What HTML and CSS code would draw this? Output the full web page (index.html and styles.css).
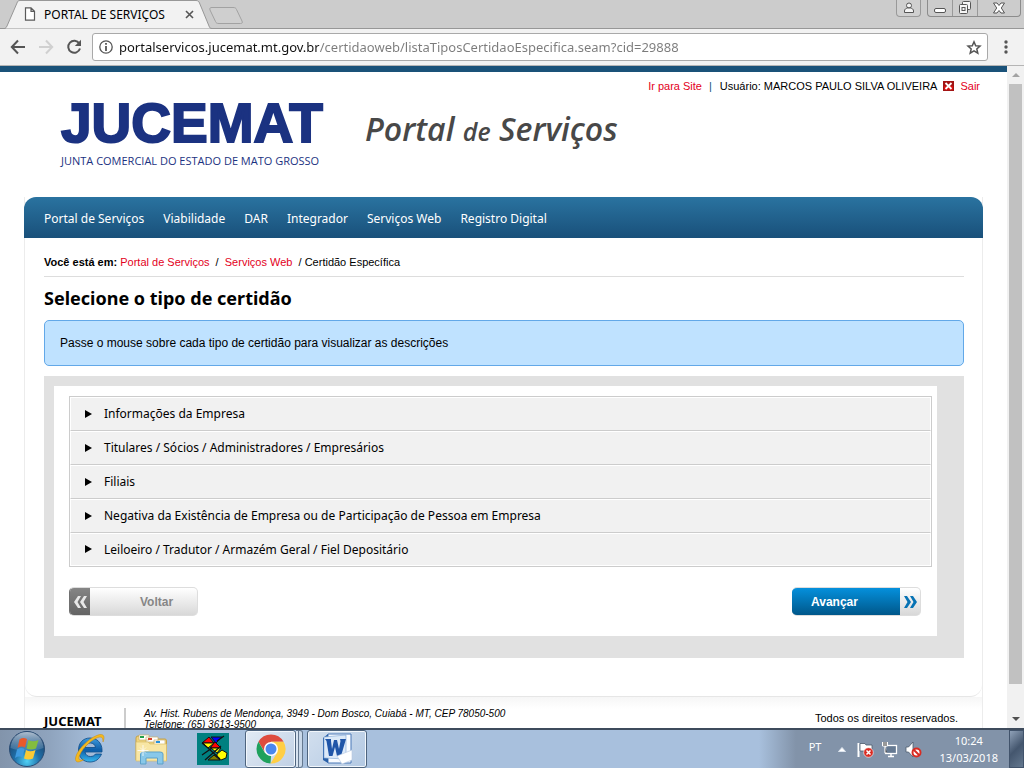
FILE: index.html
```html
<!DOCTYPE html>
<html lang="pt-BR">
<head>
<meta charset="utf-8">
<title>PORTAL DE SERVIÇOS</title>
<link rel="stylesheet" href="styles.css">
</head>
<body>
<header class="tabstrip">
  <svg class="tab-shape" width="244" height="29" viewBox="0 0 244 29" aria-hidden="true">
    <path d="M0 28.500H5C6 28 6.500 27 7 26L17 3C17.500 1.500 18 .5 20 .5H196C198 .5 199 1.500 199.500 3L209 26C209.500 27.500 210 28.500 212 28.500" fill="#f2f2f2" stroke="#979797"/>
    <path d="M212 7.500H233C235 7.500 236 8 236.500 9.500L242 21C242.800 23 242 23.500 240.500 23.500H219C217 23.500 216 23 215.500 21.500L210 10C209.500 8 210 7.500 212 7.500Z" fill="#cfcfcf" stroke="#a2a2a2"/>
  </svg>
  <div class="tab">
    <svg width="12" height="14" viewBox="0 0 12 14" fill="#fff" stroke="#5a5a5a" stroke-width="1.200"><path d="M1.500.8H7L10.500 4.300V13.200H1.500ZM7 .8V4.300H10.500"/></svg>
    <span class="tab-title">PORTAL DE SERVIÇOS</span>
    <button class="plain" aria-label="Fechar guia"><svg width="9" height="9" viewBox="0 0 9 9" stroke="#555" stroke-width="1.600"><path d="M1 1L8 8M8 1L1 8"/></svg></button>
  </div>
  <div class="window-controls">
    <button class="win user" aria-label="Usuário"><svg width="12" height="12" viewBox="0 0 12 12" fill="#f5f5f5" stroke="#555"><circle cx="6" cy="3.500" r="2.500"/><path d="M1.500 10.500V9C1.500 7 3 6.500 4.500 6H7.500C9 6.500 10.500 7 10.500 9V10.500Z"/></svg></button>
    <div class="win-group">
      <button class="win" aria-label="Minimizar"><svg width="13" height="14" viewBox="0 0 13 14" fill="#fff" stroke="#555"><rect x=".5" y="7.500" width="11" height="4" rx="1.500"/></svg></button>
      <button class="win" aria-label="Restaurar"><svg width="14" height="14" viewBox="0 0 14 14" fill="#f5f5f5" stroke="#555"><rect x="4.500" y=".5" width="8" height="8" rx="1"/><rect x="1.500" y="3.500" width="8" height="9" rx="1"/><rect x="4" y="6.500" width="3" height="3"/></svg></button>
      <button class="win close" aria-label="Fechar"><svg width="14" height="12" viewBox="0 0 14 12" fill="#fff" stroke="#555"><path d="M1.500 1H5L7 3.500L9 1H12.500L9.300 6L12.500 11H9L7 8.500L5 11H1.500L4.700 6Z"/></svg></button>
    </div>
  </div>
</header>
<div class="toolbar">
  <button class="plain" aria-label="Voltar"><svg width="16" height="16" viewBox="0 0 16 16" fill="none" stroke="#555" stroke-width="2"><path d="M15 8H2M8 1.500L1.800 8L8 14.500"/></svg></button>
  <button class="plain" aria-label="Avançar"><svg width="16" height="16" viewBox="0 0 16 16" fill="none" stroke="#d0d0d0" stroke-width="2"><path d="M1 8H14M8 1.500L14.200 8L8 14.500"/></svg></button>
  <button class="plain" aria-label="Recarregar"><svg width="16" height="16" viewBox="0 0 16 16"><path d="M13.300 4.500A6 6 0 1 0 14 9.500" fill="none" stroke="#555" stroke-width="2"/><path d="M15 .8V7H8.800Z" fill="#555"/></svg></button>
  <div class="omnibox">
    <svg width="14" height="14" viewBox="0 0 14 14" fill="none" stroke="#555"><circle cx="7" cy="7" r="6.200" stroke-width="1.300"/><path d="M7 3V4.700M7 6V11" stroke-width="1.800"/></svg>
    <input class="url" type="text" aria-label="Endereço" value="portalservicos.jucemat.mt.gov.br/certidaoweb/listaTiposCertidaoEspecifica.seam?cid=29888">
    <button class="plain" aria-label="Favoritos"><svg width="16" height="15" viewBox="0 0 16 15" fill="none" stroke="#555" stroke-width="1.500"><path d="M8 1.800L9.700 5.700L14 6.100L10.800 8.900L11.800 13.200L8 10.900L4.200 13.200L5.200 8.900L2 6.100L6.300 5.700Z"/></svg></button>
  </div>
  <button class="plain" aria-label="Menu"><svg width="4" height="14" viewBox="0 0 4 14" fill="#555"><circle cx="2" cy="2" r="1.700"/><circle cx="2" cy="7" r="1.700"/><circle cx="2" cy="12" r="1.700"/></svg></button>
</div>

<div class="viewport">
  <main class="page">
    <div class="userbar">
      <a href="#">Ir para Site</a><span class="bar">|</span><span>Usuário: MARCOS PAULO SILVA OLIVEIRA</span>
      <svg width="11" height="10" viewBox="0 0 11 10"><rect width="11" height="10" fill="#a31414"/><rect x="1" y="5" width="9" height="4" fill="#d41111"/><path d="M2.500 2L8.500 8M8.500 2L2.500 8" stroke="#fff" stroke-width="1.800"/></svg>
      <a href="#">Sair</a>
    </div>
    <div class="brand">
      <div class="logo"><span class="logo-name">JUCEMAT</span><span class="logo-sub">JUNTA COMERCIAL DO ESTADO DE MATO GROSSO</span></div>
      <div class="portal-title">Portal <small>de</small> Serviços</div>
    </div>
    <div class="frame">
      <nav class="menu">
        <a href="#">Portal de Serviços</a><a href="#">Viabilidade</a><a href="#">DAR</a><a href="#">Integrador</a><a href="#">Serviços Web</a><a href="#">Registro Digital</a>
      </nav>
      <section class="content">
        <div class="crumbs"><b>Você está em:</b> <a href="#">Portal de Serviços</a> &nbsp;/&nbsp; <a href="#">Serviços Web</a> &nbsp;/ Certidão Específica</div>
        <h1>Selecione o tipo de certidão</h1>
        <p class="notice">Passe o mouse sobre cada tipo de certidão para visualizar as descrições</p>
        <div class="panel">
          <div class="panel-inner">
            <div class="types">
              <button class="type">Informações da Empresa</button>
              <button class="type">Titulares / Sócios / Administradores / Empresários</button>
              <button class="type">Filiais</button>
              <button class="type">Negativa da Existência de Empresa ou de Participação de Pessoa em Empresa</button>
              <button class="type">Leiloeiro / Tradutor / Armazém Geral / Fiel Depositário</button>
            </div>
            <div class="actions">
              <button class="action back"><span class="cap"><svg width="13" height="12" viewBox="0 0 13 12" fill="#e8e8e8"><path d="M4 0H7L3.500 6L7 12H4L0 6ZM10 0H13L9.500 6L13 12H10L6 6Z"/></svg></span><span class="label">Voltar</span></button>
              <button class="action next"><span class="label">Avançar</span><span class="cap"><svg width="13" height="12" viewBox="0 0 13 12" fill="#0873b4"><path d="M0 0H3L7 6L3 12H0L3.500 6ZM6 0H9L13 6L9 12H6L9.500 6Z"/></svg></span></button>
            </div>
          </div>
        </div>
      </section>
      <footer class="footer">
        <strong>JUCEMAT</strong>
        <address>Av. Hist. Rubens de Mendonça, 3949 - Dom Bosco, Cuiabá - MT, CEP 78050-500<br>Telefone: (65) 3613-9500</address>
        <span class="rights">Todos os direitos reservados.</span>
      </footer>
    </div>
  </main>
  <div class="scrollbar" aria-hidden="true">
    <svg width="8" height="4" viewBox="0 0 8 4"><path d="M0 4L4 0L8 4Z" fill="#a3a3a3"/></svg>
    <div class="thumb"></div>
    <svg width="8" height="4" viewBox="0 0 8 4"><path d="M0 0L4 4L8 0Z" fill="#505050"/></svg>
  </div>
</div>

<footer class="taskbar">
  <button class="plain start" aria-label="Iniciar"><svg width="38" height="38" viewBox="0 0 38 38">
    <defs><radialGradient id="orb" cx=".5" cy=".85" r=".8"><stop offset="0" stop-color="#4fd0f5"/><stop offset=".45" stop-color="#1f6fa8"/><stop offset="1" stop-color="#1b3c61"/></radialGradient>
    <linearGradient id="shine" x2="0" y2="1"><stop offset="0" stop-color="#dfeaf5" stop-opacity=".75"/><stop offset="1" stop-color="#8fb3d3" stop-opacity=".2"/></linearGradient></defs>
    <circle cx="19" cy="19" r="17.500" fill="url(#orb)" stroke="#2a4c74"/>
    <path d="M2.500 18C3 8 10 2 19 2S35 8 35.500 18C26 22 12 22 2.500 18Z" fill="url(#shine)"/>
    <path d="M11.500 9.500Q15 7 19 9L17 17.500Q13.500 15.500 9.500 18Z" fill="#e8592b"/>
    <path d="M20.500 10Q25 12.500 30.500 10L28 18.500Q23 20.500 18.500 18.500Z" fill="#83bd3f"/>
    <path d="M9 19.500Q13 17 16.500 19L14.500 27.500Q11 25.500 7 28Z" fill="#3f9be0"/>
    <path d="M18 20Q22 22.500 27.500 20L25 28.500Q20.500 30.500 16 28.500Z" fill="#fbca35"/>
  </svg></button>
  <button class="plain app" aria-label="Internet Explorer"><svg width="34" height="34" viewBox="0 0 34 34">
    <defs><linearGradient id="ie" x2="0" y2="1"><stop offset="0" stop-color="#3f9bdc"/><stop offset=".5" stop-color="#0d5da8"/><stop offset="1" stop-color="#37b8ef"/></linearGradient></defs>
    <path d="M18 6C25 6 30 11 30 18V20H13C13.500 23 15.500 24.500 18.500 24.500C21 24.500 22.500 23.500 23.500 22H29.500C27.500 27 23.500 30 18 30C11 30 6.500 25 6.500 18S11 6 18 6ZM13 15.500H23.500C23 12.500 21 11 18.300 11S13.500 12.500 13 15.500Z" fill="url(#ie)" stroke="#0c4a86" stroke-width=".8"/>
    <path d="M31 10C33 5 32 2 28 2.500C20 3.500 5 17 3.500 26C3 31 7 31 12 27.500C7 29 6 27 7.500 23.500C11 15 22 5.500 28 5C30.500 5 31 7 31 10Z" fill="#f4b91e" stroke="#c98b12" stroke-width=".5"/>
  </svg></button>
  <button class="plain app" aria-label="Explorador de arquivos"><svg width="34" height="34" viewBox="0 0 34 34">
    <path d="M2 28V6Q2 4 4 4H13L15 7H31Q32.500 7 32.500 9V28Z" fill="#f0d47c" stroke="#c5a148"/>
    <path d="M5 3H15V8H5ZM12 5H24V10H12ZM20 8H31V13H20Z" fill="#fff" stroke="#c9b06c" stroke-width=".7"/>
    <path d="M6 4H10V6H6Z" fill="#22a04a"/><path d="M14 6H18V8H14Z" fill="#d8402a"/><path d="M22 9H26V11H22Z" fill="#2692dc"/>
    <path d="M2 10H14L16 12H32.500V29H2Z" fill="#f8e6a4" stroke="#d8bd6b" stroke-width=".7"/>
    <path d="M6.500 32V22Q6.500 20 9.500 20H26Q29 20 29 22V32H23.500V26H12V32Z" fill="#88c8e9" stroke="#5ca1c9"/>
    <path d="M9 13V24M3.500 18.500H14.500" stroke="#fff" stroke-width=".8"/><path d="M6 15.500L12 21.500M12 15.500L6 21.500" stroke="#fff" stroke-width=".6"/>
  </svg></button>
  <button class="plain app" aria-label="Sistema"><svg width="32" height="32" viewBox="0 0 32 32" stroke="#111">
    <rect width="32" height="32" fill="#008080" stroke="none"/>
    <path d="M5 10L12 4L17 10Z" fill="#f00"/><path d="M14 4H25L19 10Z" fill="#00f"/><path d="M6 10H17L11 15Z" fill="#ff0"/><path d="M13 15L18 9L24 15Z" fill="#f00"/><path d="M14 15H24L20 20Z" fill="#ff0"/>
    <path d="M20 21L25 17L30 20L29 25L24 27L20 25Z" fill="#ff0"/><path d="M11 27L17 22L23 27Z" fill="#808000"/><path d="M5 22L15 15M20 8L27 3M5 10L11 15L23 26M8 27L24 13" fill="none" stroke-width="1.300"/>
  </svg></button>
  <button class="plain running chrome" aria-label="Google Chrome"><svg width="30" height="30" viewBox="0 0 30 30">
    <path d="M2.440 7.750A14.500 14.500 0 0 1 27.560 7.750H15L9 18.500Z" fill="#de4c3e"/>
    <path d="M2.440 7.750L8.700 18.600L15 22L14.500 29.500A14.500 14.500 0 0 1 2.440 7.750Z" fill="#1fa15d"/>
    <path d="M27.560 7.750H15L21.300 18.500L14.500 29.500A14.500 14.500 0 0 0 27.560 7.750Z" fill="#ffce44"/>
    <circle cx="15" cy="15" r="7" fill="#fff"/><circle cx="15" cy="15" r="5.500" fill="#4a87ee"/>
  </svg></button>
  <div class="stack" aria-hidden="true"></div>
  <button class="plain running word" aria-label="Word"><svg width="32" height="32" viewBox="0 0 32 32">
    <path d="M7 1H30V30H7Z" fill="#f8fbff" stroke="#4a78b8"/><path d="M2 5L7 1V30L2 27Z" fill="#2960a8"/><path d="M3 4L25 2V26L3 25Z" fill="#dce9f8" stroke="#7ba3d4" stroke-width=".6"/>
    <path d="M4 6H10V8L11 16L13 7H16L18 16L19.500 8L19 6H25L20 23H16L14 14L11.500 23H8L5.500 8Z" fill="#1f55a8"/>
    <path d="M16 23L31 17V27L21 31Z" fill="#fff" stroke="#b5c8e0" stroke-width=".6"/>
  </svg></button>
  <div class="tray">
    <span class="lang">PT</span>
    <svg width="8" height="5" viewBox="0 0 8 5"><path d="M.5 4.500L4 .5L7.500 4.500Z" fill="#fff" stroke="#dce4ee"/></svg>
    <svg width="17" height="17" viewBox="0 0 17 17"><path d="M1.500 2V16" stroke="#fff" stroke-width="2"/><path d="M3 2.500H8L9 4H15V11H9L8 10H3Z" fill="#fff" stroke="#4d5a6c" stroke-width=".8"/><circle cx="11.500" cy="11.500" r="4.800" fill="#d92b22" stroke="#fff" stroke-width=".6"/><path d="M9.500 9.500L13.500 13.500M13.500 9.500L9.500 13.500" stroke="#fff" stroke-width="1.500"/></svg>
    <svg width="17" height="17" viewBox="0 0 17 17"><rect x="4.500" y="4.500" width="11" height="8" fill="#667a92" stroke="#fff" stroke-width="1.300"/><path d="M7 15.500H13M10 13V15" stroke="#fff" stroke-width="1.500"/><path d="M1.500 1V5H6.500V1M4 5V12H6M3 1V4M5 1V4" fill="#333" stroke="#fff"/></svg>
    <svg width="17" height="17" viewBox="0 0 17 17"><path d="M1 6H3.500L8 1V16L3.500 11H1Z" fill="#fff" stroke="#4d5a6c" stroke-width=".8"/><circle cx="11.500" cy="11.500" r="4" fill="#fff" stroke="#d92b22" stroke-width="2"/><path d="M8.500 8.500L14.500 14.500" stroke="#d92b22" stroke-width="2"/></svg>
    <div class="clock"><span>10:24</span><span>13/03/2018</span></div>
    <button class="plain desktop" aria-label="Mostrar área de trabalho"></button>
  </div>
</footer>
</body>
</html>
```
FILE: styles.css
```css
* { box-sizing: border-box; }
body { margin: 0; height: 100vh; display: flex; flex-direction: column; overflow: hidden; background: #fff; color: #000; font-family: "Liberation Sans", Arial, sans-serif; font-size: 11px; }
button { font: inherit; color: inherit; }
svg { display: block; flex: none; }
a { color: #e3001b; text-decoration: none; }
.plain { border: 0; padding: 0; background: none; display: flex; align-items: center; justify-content: center; flex: none; }

.tabstrip { position: relative; flex: none; height: 29px; display: flex; justify-content: space-between; background: #ccc; border-bottom: 1px solid #979797; }
.tab-shape { position: absolute; left: 0; top: 0; }
.tab { position: relative; display: flex; align-items: center; width: 194px; padding-left: 24px; gap: 8px; font-family: "Noto Sans", sans-serif; font-size: 12px; }
.tab-title { flex: 1; white-space: nowrap; }
.window-controls { display: flex; gap: 6px; padding-right: 3px; align-items: flex-start; }
.win { height: 17px; width: 25px; padding: 0; border: 1px solid #999; border-top: 0; border-radius: 0 0 4px 4px; background: #d0d0d0; display: flex; align-items: center; justify-content: center; }
.win-group { display: flex; border: 1px solid #8c8c8c; border-top: 0; border-radius: 0 0 4px 4px; }
.win-group .win { height: 16px; border: 0; border-right: 1px solid #999; border-radius: 0; background: none; }
.win-group .close { width: 42px; border-right: 0; }

.toolbar { flex: none; height: 37px; display: flex; align-items: center; gap: 12px; padding: 0 16px 0 10px; background: #f2f2f2; border-bottom: 1px solid #b5b5b5; }
.omnibox { flex: 1; height: 28px; display: flex; align-items: center; gap: 6px; padding: 0 5px 0 6px; border: 1px solid #a9a9a9; border-radius: 3px; background: #fff; }
.toolbar .omnibox { margin: 0 4px 0 -2px; }
.url { flex: 1; min-width: 0; border: 0; padding: 0; outline: 0; font: 13px "Noto Sans", sans-serif; color: transparent; background: linear-gradient(to right, #111 200px, #7b7b7b 200px); background-clip: text; -webkit-background-clip: text; }

.viewport { flex: 1; min-height: 0; display: flex; }
.page { flex: 1; min-width: 0; overflow: hidden; border-top: 6px solid #1a5279; padding: 0 24px; }
.userbar { display: flex; justify-content: flex-end; align-items: center; height: 28px; padding-right: 3px; gap: 6px; }
.userbar .bar { color: #14517b; padding: 0 2px 0 1px; }
.brand { display: flex; height: 105px; margin-top: -8px; padding-left: 37px; gap: 44px; }
.logo { display: flex; flex-direction: column; width: 260px; color: #1b3281; }
.logo-name { font-weight: 700; font-size: 55px; line-height: 62px; -webkit-text-stroke: 2px #1b3281; }
.logo-sub { font: 11px/14px "Open Sans", sans-serif; white-space: nowrap; }
.portal-title { padding-top: 9px; font: italic 600 32px/56px "Open Sans", sans-serif; color: #484848; white-space: nowrap; }
.portal-title small { font-size: 25px; }
.frame { border: 1px solid #ececec; border-top: 0; border-bottom: 0; }
.menu { display: flex; align-items: center; gap: 19px; height: 41px; margin: 0 -1px; padding: 2px 20px 0; border-radius: 12px 12px 0 0; background: linear-gradient(#2a73a0, #19507a); font: 12px "Noto Sans", sans-serif; }
.menu a { color: #fff; }
.content { padding: 0 18px 38px 19px; border-bottom: 1px solid #e6e6e6; border-radius: 0 0 12px 12px; }
.crumbs { height: 39px; line-height: 49px; border-bottom: 1px solid #ddd; white-space: nowrap; }
h1 { margin: 0; font: 700 18px/43px "Noto Sans", sans-serif; }
.notice { margin: 0 0 10px; padding: 0 15px; border: 1px solid #62a8e8; border-radius: 5px; background: #bfe2ff; font-size: 12px; line-height: 44px; }
.panel { padding: 10px 27px 22px 10px; background: #e1e1e1; }
.panel-inner { padding: 10px 5px 20px 15px; background: #fff; }
.types { border: 1px solid #ccc; }
.type { display: flex; align-items: center; gap: 12px; width: 100%; height: 34px; padding: 0 14px 1px; border: 1px solid #fff; border-bottom: 1px solid #ccc; background: #f1f1f1; font: 12px "Noto Sans", sans-serif; text-align: left; }
.type:last-child { border-bottom-color: #fff; height: 33px; }
.type::before { content: ""; width: 0; height: 0; border: solid transparent; border-width: 4px 0 4px 7px; border-left-color: #000; }
.actions { display: flex; justify-content: space-between; padding: 20px 11px 0 0; }
.action { display: flex; align-items: stretch; width: 129px; height: 29px; padding: 0; border: 1px solid #ddd; border-radius: 5px; overflow: hidden; font-size: 12px; font-weight: 700; }
.action .label { flex: 1; display: flex; align-items: center; }
.action .cap { display: flex; align-items: center; justify-content: center; width: 20px; }
.back { background: linear-gradient(#fff, #d8d8d8); color: #868686; border-left-color: #707070; }
.back .cap { background: linear-gradient(#858585, #646464); }
.back .label { padding-left: 50px; }
.next { background: linear-gradient(#fff, #d8d8d8); border-left: 0; }
.next .label { background: linear-gradient(#0590dc, #00578a); color: #fff; padding-left: 19px; }
.footer { display: flex; align-items: flex-start; padding: 11px 24px 0 19px; background: linear-gradient(#f6f6f6, #fff 12px); }
.footer strong { font: 700 13px/26px "Noto Sans", sans-serif; width: 82px; border-right: 2px solid #ccc; }
.footer address { flex: 1; padding-left: 18px; font-size: 10px; line-height: 11px; }
.rights { line-height: 20px; }

.scrollbar { width: 17px; flex: none; display: flex; flex-direction: column; align-items: center; gap: 7px; padding: 7px 0; background: #f1f1f1; }
.thumb { width: 13px; height: 600px; flex: 0 1 600px; background: #c1c1c1; }
.scrollbar svg:last-child { margin-top: auto; }

.taskbar { flex: none; height: 40px; display: flex; align-items: center; border-top: 2px solid #3e4b5c; padding-left: 8px; background: linear-gradient(to right, #8294ab 0, #8fa4be 50px, #a8c0dd 100px, #a8c0dd calc(100% - 265px), #8293a9 calc(100% - 228px), #8293a9 100%); }
.start { margin-right: 26px; }
.app { width: 34px; margin-right: 28px; }
.running { height: 38px; border: 1px solid #4e647e; border-radius: 3px; box-shadow: inset 0 0 0 1px #f2f7fc; background: linear-gradient(135deg, #e2ebf5, #c0d0e4); }
.chrome { width: 51px; margin-left: -13px; }
.stack { width: 7px; height: 38px; border: 1px solid #64788f; border-left: 0; border-radius: 0 3px 3px 0; background: linear-gradient(to right, #d8e4f1 2px, #64788f 2px, #64788f 3px, #c9d8e9 3px); }
.word { width: 60px; margin-left: 4px; background: linear-gradient(135deg, #d2dfee, #b3c9e3); }
.tray { margin-left: auto; height: 100%; display: flex; align-items: center; color: #fff; font: 11px/17px "Noto Sans", sans-serif; gap: 7px; }
.lang { margin-right: 10px; padding-bottom: 6px; }
.tray > svg + svg { margin-left: 4px; }
.tray > svg + svg + svg { margin-left: 0; }
.clock { display: flex; flex-direction: column; align-items: center; margin: 0 4px 0 10px; }
.desktop { width: 15px; height: 38px; border: 1px solid #41536b; background: linear-gradient(135deg, #8fa1b8, #44566e 50%, #64788f); }
```
